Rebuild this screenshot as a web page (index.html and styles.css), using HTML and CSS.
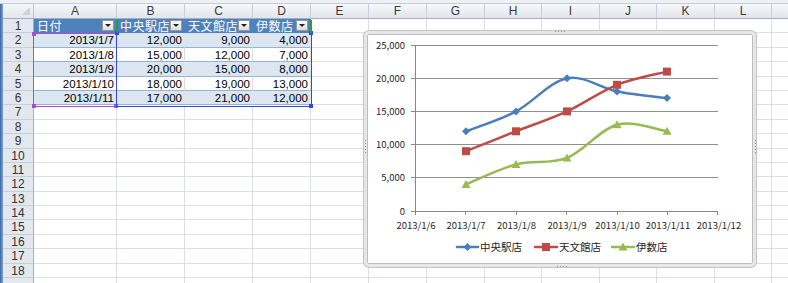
FILE: index.html
```html
<!DOCTYPE html>
<html lang="ja">

<head>
  <meta charset="UTF-8" />
  <title>Sheet1 - Excel</title>
  <link rel="stylesheet" href="styles.css">
</head>

<body>
  <div class="window">
    <div class="ribbon-edge"></div>
    <div class="workspace">
      <div class="frame-edge"></div>
      <div class="sheet">
        <!-- column headers -->
        <div class="corner"></div>
        <div class="colhead">A</div>
        <div class="colhead">B</div>
        <div class="colhead">C</div>
        <div class="colhead">D</div>
        <div class="colhead">E</div>
        <div class="colhead">F</div>
        <div class="colhead">G</div>
        <div class="colhead">H</div>
        <div class="colhead">I</div>
        <div class="colhead">J</div>
        <div class="colhead">K</div>
        <div class="colhead">L</div>
        <div class="colhead"></div>

        <!-- table header -->
        <div class="rowhead">1</div>
        <div class="tbl-head"><span class="caption">日付</span><span class="filter"></span></div>
        <div class="tbl-head"><span class="caption">中央駅店</span><span class="filter"></span></div>
        <div class="tbl-head"><span class="caption">天文館店</span><span class="filter"></span></div>
        <div class="tbl-head"><span class="caption">伊数店</span><span class="filter"></span></div>
        <div></div><div></div><div></div><div></div><div></div><div></div><div></div><div></div><div></div>

        <!-- table rows -->
        <div class="rowhead">2</div>
        <div class="num band">2013/1/7</div>
        <div class="num band">12,000</div>
        <div class="num band">9,000</div>
        <div class="num band">4,000</div>
        <div></div><div></div><div></div><div></div><div></div><div></div><div></div><div></div><div></div>

        <div class="rowhead">3</div>
        <div class="num plain">2013/1/8</div>
        <div class="num plain">15,000</div>
        <div class="num plain">12,000</div>
        <div class="num plain">7,000</div>
        <div></div><div></div><div></div><div></div><div></div><div></div><div></div><div></div><div></div>

        <div class="rowhead">4</div>
        <div class="num band">2013/1/9</div>
        <div class="num band">20,000</div>
        <div class="num band">15,000</div>
        <div class="num band">8,000</div>
        <div></div><div></div><div></div><div></div><div></div><div></div><div></div><div></div><div></div>

        <div class="rowhead">5</div>
        <div class="num plain">2013/1/10</div>
        <div class="num plain">18,000</div>
        <div class="num plain">19,000</div>
        <div class="num plain">13,000</div>
        <div></div><div></div><div></div><div></div><div></div><div></div><div></div><div></div><div></div>

        <div class="rowhead">6</div>
        <div class="num band">2013/1/11</div>
        <div class="num band">17,000</div>
        <div class="num band">21,000</div>
        <div class="num band">12,000</div>
        <div></div><div></div><div></div><div></div><div></div><div></div><div></div><div></div><div></div>

        <!-- empty rows -->
        <div class="rowhead">7</div><div></div><div></div><div></div><div></div><div></div><div></div><div></div><div></div><div></div><div></div><div></div><div></div><div></div>
        <div class="rowhead">8</div><div></div><div></div><div></div><div></div><div></div><div></div><div></div><div></div><div></div><div></div><div></div><div></div><div></div>
        <div class="rowhead">9</div><div></div><div></div><div></div><div></div><div></div><div></div><div></div><div></div><div></div><div></div><div></div><div></div><div></div>
        <div class="rowhead">10</div><div></div><div></div><div></div><div></div><div></div><div></div><div></div><div></div><div></div><div></div><div></div><div></div><div></div>
        <div class="rowhead">11</div><div></div><div></div><div></div><div></div><div></div><div></div><div></div><div></div><div></div><div></div><div></div><div></div><div></div>
        <div class="rowhead">12</div><div></div><div></div><div></div><div></div><div></div><div></div><div></div><div></div><div></div><div></div><div></div><div></div><div></div>
        <div class="rowhead">13</div><div></div><div></div><div></div><div></div><div></div><div></div><div></div><div></div><div></div><div></div><div></div><div></div><div></div>
        <div class="rowhead">14</div><div></div><div></div><div></div><div></div><div></div><div></div><div></div><div></div><div></div><div></div><div></div><div></div><div></div>
        <div class="rowhead">15</div><div></div><div></div><div></div><div></div><div></div><div></div><div></div><div></div><div></div><div></div><div></div><div></div><div></div>
        <div class="rowhead">16</div><div></div><div></div><div></div><div></div><div></div><div></div><div></div><div></div><div></div><div></div><div></div><div></div><div></div>
        <div class="rowhead">17</div><div></div><div></div><div></div><div></div><div></div><div></div><div></div><div></div><div></div><div></div><div></div><div></div><div></div>
        <div class="rowhead">18</div><div></div><div></div><div></div><div></div><div></div><div></div><div></div><div></div><div></div><div></div><div></div><div></div><div></div>
        <div class="rowhead"></div><div></div><div></div><div></div><div></div><div></div><div></div><div></div><div></div><div></div><div></div><div></div><div></div><div></div>
      </div>
    </div>

    <!-- range finder outlines for the selected chart -->
    <div class="range range-cat">
      <span class="handle tl"></span><span class="handle bl"></span><span class="handle br"></span>
    </div>
    <div class="range range-val">
      <span class="handle tl"></span><span class="handle tr"></span><span class="handle br"></span>
    </div>
    <div class="range range-name"></div>

    <!-- chart -->
    <div class="chart">
      <svg class="plot" viewBox="363 30 394 238" width="394" height="238">
        <defs>
          <path id="dia" d="M-4 0L0-4 4 0 0 4Z" />
          <rect id="sq" x="-4" y="-4" width="8" height="8" />
          <path id="tri" d="M0-4.5L4.5 3.5-4.5 3.5Z" />
        </defs>

        <path class="grid" d="M415 45.5H718M415 78.5H718M415 111.5H718M415 144.5H718M415 177.5H718" />
        <path class="axis" d="M415.5 45V211.5H718
          M411 45.5H415M411 78.5H415M411 111.5H415M411 144.5H415M411 177.5H415M411 211.5H415
          M415.5 211V215M465.5 211V215M516.5 211V215M566.5 211V215M617.5 211V215M667.5 211V215M717.5 211V215" />

        <g class="ylabels">
          <text x="405" y="48.5">25,000</text>
          <text x="405" y="81.5">20,000</text>
          <text x="405" y="114.5">15,000</text>
          <text x="405" y="147.5">10,000</text>
          <text x="405" y="180.5">5,000</text>
          <text x="405" y="214.5">0</text>
        </g>
        <g class="xlabels">
          <text x="416" y="229">2013/1/6</text>
          <text x="466" y="229">2013/1/7</text>
          <text x="516.5" y="229">2013/1/8</text>
          <text x="567" y="229">2013/1/9</text>
          <text x="617.5" y="229">2013/1/10</text>
          <text x="668" y="229">2013/1/11</text>
          <text x="719" y="229">2013/1/12</text>
        </g>

        <!-- 中央駅店 -->
        <path class="line blue" d="M466 131.3C474.3 128 499.2 120.3 516 111.4C532.8 102.6 550.2 81.5 567 78.2C583.8 74.9 600.3 88.2 617 91.5C633.7 94.8 658.7 97 667 98.1" />
        <g class="blue-fill">
          <use href="#dia" x="466" y="131.3" />
          <use href="#dia" x="516" y="111.4" />
          <use href="#dia" x="567" y="78.2" />
          <use href="#dia" x="617" y="91.5" />
          <use href="#dia" x="667" y="98.1" />
        </g>

        <!-- 天文館店 -->
        <path class="line red" d="M466 151.2C474.3 147.9 499.2 137.9 516 131.3C532.8 124.7 550.2 119.2 567 111.4C583.8 103.7 600.3 91.4 617 84.8C633.7 78.2 658.7 73.8 667 71.6" />
        <g class="red-fill">
          <use href="#sq" x="466" y="151.2" />
          <use href="#sq" x="516" y="131.3" />
          <use href="#sq" x="567" y="111.4" />
          <use href="#sq" x="617" y="84.8" />
          <use href="#sq" x="667" y="71.6" />
        </g>

        <!-- 伊数店 -->
        <path class="line green" d="M466 184.4C474.3 181.1 499.2 168.9 516 164.5C532.8 160.1 550.2 164.5 567 157.9C583.8 151.3 600.3 129.1 617 124.7C633.7 120.3 658.7 130.2 667 131.3" />
        <g class="green-fill">
          <use href="#tri" x="466" y="184.4" />
          <use href="#tri" x="516" y="164.5" />
          <use href="#tri" x="567" y="157.9" />
          <use href="#tri" x="617" y="124.7" />
          <use href="#tri" x="667" y="131.3" />
        </g>

        <!-- legend -->
        <g class="legend">
          <path class="line blue" d="M457 247H478" />
          <use class="blue-fill" href="#dia" x="467.5" y="247" />
          <text x="480" y="251">中央駅店</text>
          <path class="line red" d="M535 247H557" />
          <use class="red-fill" href="#sq" x="546" y="247" />
          <text x="559" y="251">天文館店</text>
          <path class="line green" d="M612 247H634" />
          <use class="green-fill" href="#tri" x="623" y="247" />
          <text x="636" y="251">伊数店</text>
        </g>

        <!-- frame grips -->
        <path class="grip" d="M555 31.5H567M557 266.5H569M365.5 140V153M755.5 140V153" />
      </svg>
    </div>
  </div>
</body>

</html>
```

FILE: styles.css
```css
body {
  margin: 0;
  background: #fff;
  font-family: "Noto Sans CJK JP", sans-serif;
}

.window {
  position: relative;
  width: 788px;
  height: 283px;
  overflow: hidden;
}

.ribbon-edge {
  height: 3px;
  background: #eef1f5;
  border-bottom: 1px solid #c5ccd5;
}

.workspace {
  display: flex;
  height: 279px;
}

.frame-edge {
  flex: none;
  width: 3px;
  background: linear-gradient(to right, #3a69a6, #7fa3d0);
}

.sheet {
  flex: 1;
  display: grid;
  grid-template-columns: 31px 83px 68px 68px 58px 58px 58px 58px 57px 58px 57px 58px 57px 58px;
  grid-template-rows: 15px;
  grid-auto-rows: 14.4px;
  overflow: hidden;
}

.sheet > div {
  box-sizing: border-box;
  border-right: 1px solid #dadde2;
  border-bottom: 1px solid #dadde2;
  font-size: 11px;
  line-height: 13px;
  white-space: nowrap;
  overflow: hidden;
  color: #000;
}

.sheet > .corner {
  position: relative;
  background: linear-gradient(#f4f6f9, #e2e7ed);
  border-right-color: #b9c2cd;
  border-bottom-color: #9fafc2;
}

.corner::after {
  content: "";
  position: absolute;
  right: 3px;
  bottom: 3px;
  border-left: 8px solid transparent;
  border-bottom: 8px solid #cdd3da;
}

.sheet > .colhead {
  background: linear-gradient(#f6f8fa, #e1e6ec);
  border-right-color: #c7ced7;
  border-bottom-color: #9fafc2;
  text-align: center;
  color: #3c3c3c;
  font-family: "Liberation Sans", sans-serif;
  font-size: 12px;
  line-height: 14px;
}

.sheet > .rowhead {
  background: #e3e8ee;
  border-right-color: #9fafc2;
  border-bottom-color: #c7ced7;
  text-align: center;
  color: #333;
  font-family: "Liberation Sans", sans-serif;
  font-size: 12px;
  line-height: 14px;
}

.sheet > .tbl-head {
  display: flex;
  align-items: center;
  padding-left: 3px;
  background: #4f81bd;
  border-color: #4f81bd;
  color: #fff;
  overflow: visible;
}

.caption {
  font-size: 12px;
  line-height: 12px;
  letter-spacing: 0.5px;
}

.filter {
  position: relative;
  flex: none;
  width: 12px;
  height: 11px;
  margin-left: auto;
  margin-right: 2px;
  box-sizing: border-box;
  border: 1px solid #9a9a9a;
  background: linear-gradient(#ffffff, #dcdcdc);
}

.filter::after {
  content: "";
  position: absolute;
  left: 2px;
  top: 3px;
  border-left: 3px solid transparent;
  border-right: 3px solid transparent;
  border-top: 3px solid #222;
}

.sheet > .num {
  text-align: right;
  padding-right: 2px;
  font-family: "Liberation Sans", sans-serif;
  font-size: 11.5px;
  line-height: 14px;
  border-bottom-color: #95b3d7;
}

.sheet > .band {
  background: #dce6f1;
  border-right-color: #dce6f1;
}

.range {
  position: absolute;
  box-sizing: border-box;
}

.range-cat {
  left: 33px;
  top: 33px;
  width: 84px;
  height: 74px;
  border: 1px solid #b04ad0;
}

.range-val {
  left: 116px;
  top: 33px;
  width: 196px;
  height: 74px;
  border: 1px solid #3344f2;
  border-top: none;
}

.range-name {
  left: 116px;
  top: 20px;
  width: 196px;
  height: 13px;
  border-left: 2px solid #2e9b3c;
  border-right: 2px solid #2e9b3c;
}

.handle {
  position: absolute;
  width: 4px;
  height: 4px;
}

.range-cat .handle {
  background: #b04ad0;
}

.range-val .handle {
  background: #3344f2;
}

.handle.tl { left: -2px; top: -2px; }
.handle.tr { right: -2px; top: -2px; }
.handle.bl { left: -2px; bottom: -2px; }
.handle.br { right: -2px; bottom: -2px; }

.chart {
  position: absolute;
  left: 364px;
  top: 31px;
  width: 392px;
  height: 236px;
  box-sizing: border-box;
  border: 3px solid #e7e7e7;
  border-radius: 5px;
  background: #fff;
  box-shadow: 0 0 0 1px #c3c3c3, inset 0 0 0 1px #bdbdbd;
}

.plot {
  position: absolute;
  left: -4px;
  top: -4px;
  overflow: visible;
}

.grid {
  fill: none;
  stroke: #8f8f8f;
  stroke-width: 1;
}

.axis {
  fill: none;
  stroke: #868686;
  stroke-width: 1;
}

.ylabels text,
.xlabels text,
.legend text {
  font-family: "Noto Sans CJK JP", sans-serif;
  fill: #262626;
}

.ylabels text {
  font-size: 9.5px;
  text-anchor: end;
}

.xlabels text {
  font-size: 9.5px;
  text-anchor: middle;
}

.legend text {
  font-size: 10.5px;
}

.line {
  fill: none;
  stroke-width: 2.5;
  stroke-linecap: round;
  stroke-linejoin: round;
}

.line.blue { stroke: #4a7ebb; }
.line.red { stroke: #be4b48; }
.line.green { stroke: #98b954; }

.blue-fill { fill: #4a7ebb; }
.red-fill { fill: #be4b48; }
.green-fill { fill: #98b954; }

.grip {
  fill: none;
  stroke: #8a8a8a;
  stroke-width: 1;
  stroke-dasharray: 1 2;
}
```
